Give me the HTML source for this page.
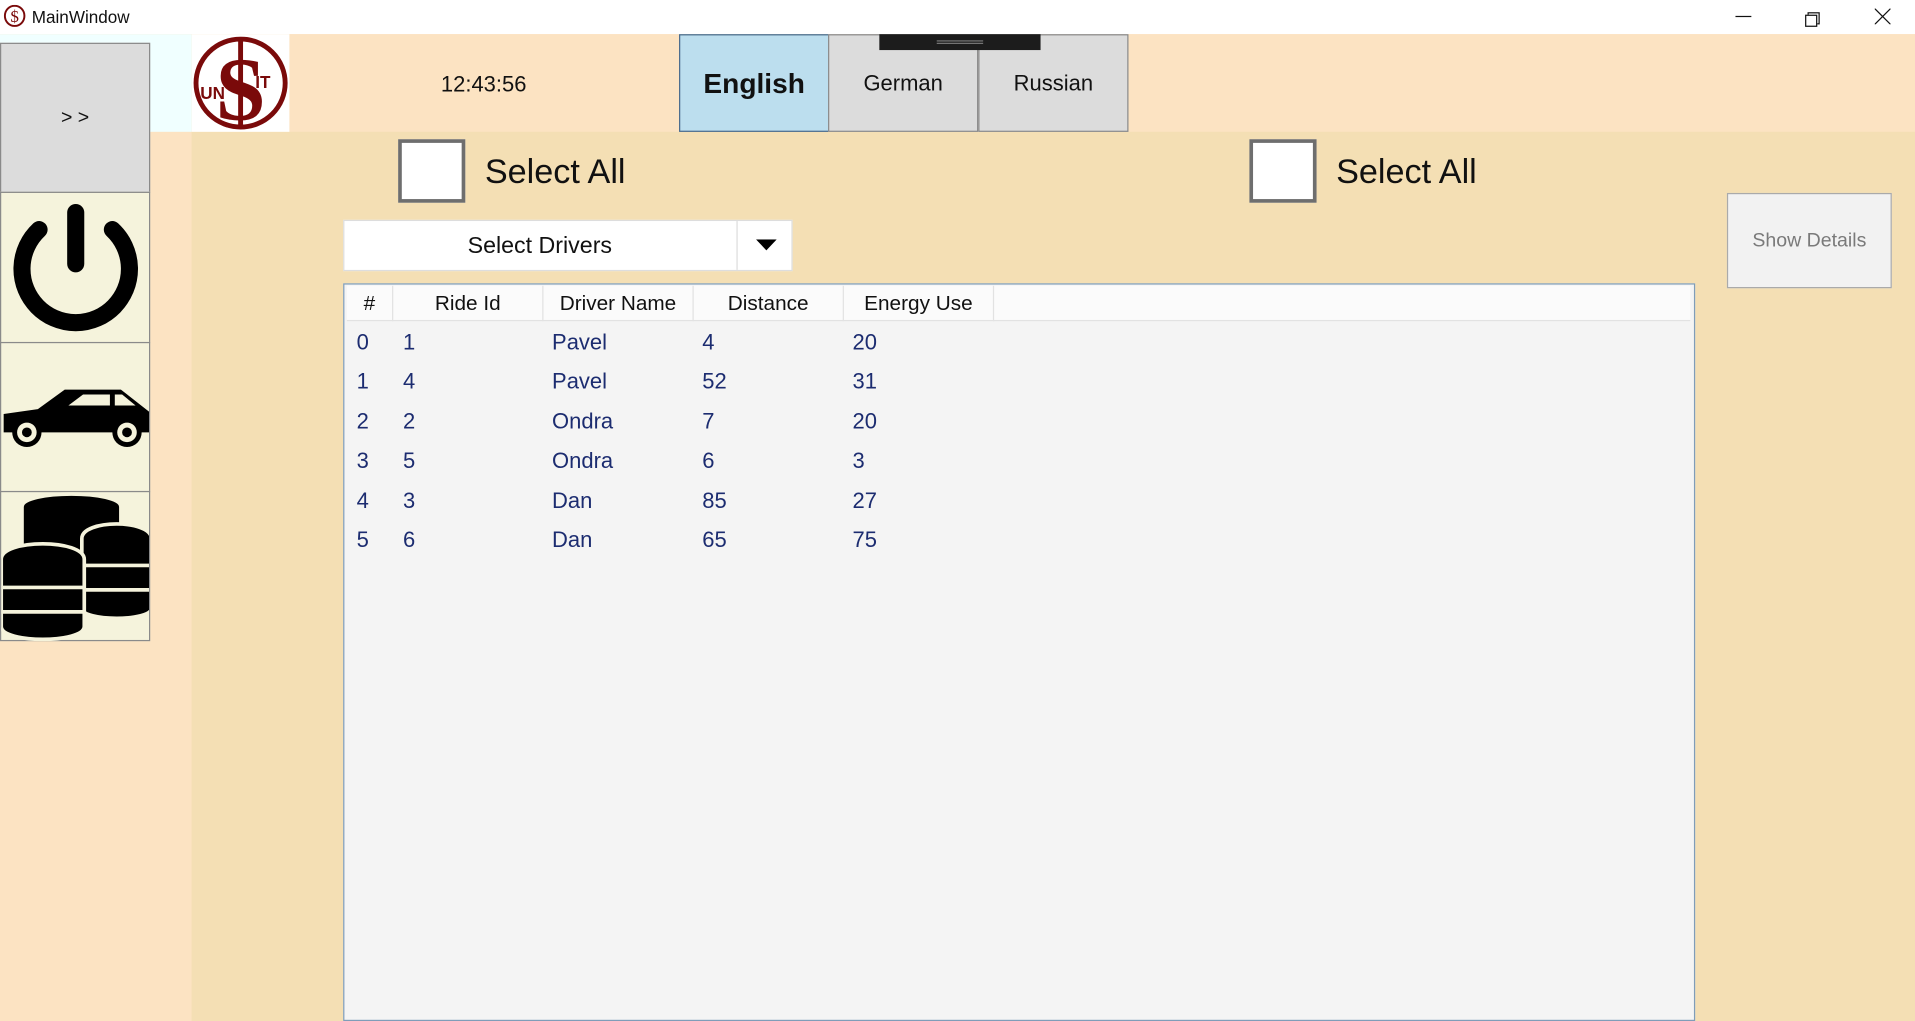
<!DOCTYPE html>
<html><head><meta charset="utf-8"><style>
html,body{margin:0;padding:0;width:1915px;height:1020px;overflow:hidden;background:#f5deb3}
#w{position:absolute;left:0;top:0;width:1568px;height:835.2px;transform:scale(1.2213);transform-origin:0 0;font-family:"Liberation Sans",sans-serif}
.a{position:absolute;box-sizing:border-box}
.t{position:absolute;white-space:nowrap}
.sb{left:0;width:123px;border:1px solid #8a8a8a;background:#f5f3dc}
.lang{top:28px;height:80px;width:123px;border:1px solid #8a8a8a;background:#dcdcdc;display:flex;align-items:center;justify-content:center;font-size:18px;color:#111}
.cb{width:55px;height:52px;border:3px solid #6e6e6e;background:#fff}
.h{top:234px;height:29px;border-right:1px solid #e2e2e2;font-size:17px;text-align:center;line-height:29px;color:#111}
.r{font-size:18px;color:#1c2c70}
</style></head><body><div id="w">
<div class="a" style="left:0;top:0;width:1568px;height:28px;background:#fff"></div>
<svg class="a" style="left:3px;top:4px" width="18" height="18" viewBox="0 0 18 18"><ellipse cx="9" cy="9" rx="8" ry="8.3" fill="none" stroke="#7a0a0a" stroke-width="1.6"/><text x="9" y="14" font-size="14" text-anchor="middle" fill="#7a0a0a" font-family="Liberation Serif">$</text></svg>
<div class="t" style="left:26px;top:6px;font-size:14px;color:#111">MainWindow</div>
<div class="a" style="left:1421px;top:13px;width:13px;height:1px;background:#111"></div>
<div class="a" style="left:1480px;top:10px;width:10px;height:10px;border:1px solid #111;background:#fff"></div>
<div class="a" style="left:1478px;top:12px;width:10px;height:10px;border:1px solid #111;background:#fff"></div>
<svg class="a" style="left:1535px;top:7px" width="13" height="13"><path d="M0 0L13 13M13 0L0 13" stroke="#111" stroke-width="1"/></svg>
<div class="a" style="left:0;top:28px;width:157px;height:80px;background:#f0ffff"></div>
<div class="a" style="left:157px;top:28px;width:80px;height:80px;background:#fff"></div>
<div class="a" style="left:237px;top:28px;width:1331px;height:80px;background:#fce3c2"></div>
<div class="a" style="left:0;top:108px;width:157px;height:728px;background:#fce3c2"></div>
<div class="a" style="left:157px;top:108px;width:1411px;height:728px;background:#f4dfb4"></div>
<svg class="a" style="left:158px;top:30px" width="78" height="76" viewBox="0 0 78 76"><ellipse cx="39" cy="38" rx="36.5" ry="36" fill="none" stroke="#7a0a0a" stroke-width="4"/><text x="39" y="68" font-size="74" text-anchor="middle" fill="#7a0a0a" font-family="Liberation Serif" font-weight="bold">S</text><rect x="37" y="2" width="4" height="72" fill="#7a0a0a"/><text x="6" y="51" font-size="14" font-weight="bold" fill="#7a0a0a" font-family="Liberation Sans">UN</text><text x="51" y="42" font-size="14" font-weight="bold" fill="#7a0a0a" font-family="Liberation Sans">IT</text></svg>
<div class="t" style="left:361px;top:59px;font-size:18px;color:#111">12:43:56</div>
<div class="a sb" style="top:35px;height:123px;background:#dcdcdc;font-size:16px;text-align:center;line-height:122px;color:#111">&gt; &gt;</div>
<div class="a sb" style="top:157px;height:124px"><svg width="121" height="122" viewBox="0 0 121 122"><path d="M31 30A44 44 0 1 0 91 30" fill="none" stroke="#000" stroke-width="14" stroke-linecap="round"/><line x1="61" y1="16" x2="61" y2="58" stroke="#000" stroke-width="14" stroke-linecap="round"/></svg></div>
<div class="a sb" style="top:280px;height:123px"><svg width="121" height="122" viewBox="0 0 121 122"><path d="M2 58L30 54L52 38H98L121 56V73H2Z" fill="#000"/><path d="M55 51L67 42H89V51ZM93 42H99L110 51H93Z" fill="#f5f3dc"/><circle cx="21" cy="73" r="12" fill="#000"/><circle cx="21" cy="73" r="8" fill="#f5f3dc"/><circle cx="21" cy="73" r="4" fill="#000"/><circle cx="103" cy="73" r="12" fill="#000"/><circle cx="103" cy="73" r="8" fill="#f5f3dc"/><circle cx="103" cy="73" r="4" fill="#000"/></svg></div>
<div class="a sb" style="top:402px;height:123px"><svg width="121" height="122" viewBox="0 0 121 122"><g fill="#000" stroke="#f5f3dc" stroke-width="3"><path d="M17 12C17 -2 98 -2 98 12V55H17Z"/><path d="M66 38C66 22 123 22 123 38V95C123 106 66 106 66 95Z"/><path d="M66 60H123M66 80H123"/><path d="M0 55C0 38 68 38 68 55V110C68 124 0 124 0 110Z"/><path d="M0 78H68M0 98H68"/></g></svg></div>
<div class="a lang" style="left:556px;background:#bcdeee;border-color:#4a6a8a;font-size:23px;font-weight:bold">English</div>
<div class="a lang" style="left:678px">German</div>
<div class="a lang" style="left:801px">Russian</div>
<div class="a" style="left:720px;top:28px;width:132px;height:13px;background:#1c1c1c"></div>
<div class="a" style="left:767px;top:33px;width:38px;height:1px;background:#777"></div>
<div class="a" style="left:767px;top:35px;width:38px;height:1px;background:#777"></div>
<div class="a cb" style="left:326px;top:114px"></div>
<div class="t" style="left:397px;top:125px;font-size:28px;color:#111">Select All</div>
<div class="a cb" style="left:1023px;top:114px"></div>
<div class="t" style="left:1094px;top:125px;font-size:28px;color:#111">Select All</div>
<div class="a" style="left:1414px;top:158px;width:135px;height:78px;background:#f2f2f2;border:1px solid #aaa;font-size:16px;color:#7a7a7a;text-align:center;line-height:78px">Show Details</div>
<div class="a" style="left:281px;top:180px;width:368px;height:42px;background:#fff;border:1px solid #ddd"></div>
<div class="a" style="left:603px;top:181px;width:1px;height:40px;background:#ddd"></div>
<div class="t" style="left:281px;top:191px;width:322px;text-align:center;font-size:19px;color:#111">Select Drivers</div>
<svg class="a" style="left:619px;top:196px" width="17" height="10"><path d="M0 0H17L8.5 9Z" fill="#000"/></svg>
<div class="a" style="left:281px;top:232px;width:1107px;height:604px;background:#f4f4f4;border:1px solid #7f9db9"></div>
<div class="a" style="left:284px;top:234px;width:1100px;height:29px;background:#fbfbfb;border-bottom:1px solid #e2e2e2"></div>
<div class="a h" style="left:284px;width:38px">#</div>
<div class="a h" style="left:322px;width:123px">Ride Id</div>
<div class="a h" style="left:445px;width:123px">Driver Name</div>
<div class="a h" style="left:568px;width:123px">Distance</div>
<div class="a h" style="left:691px;width:123px">Energy Use</div>
<div class="a" style="left:292px;top:264px;line-height:32.4px"><div class="r">0<br>1<br>2<br>3<br>4<br>5</div></div>
<div class="a" style="left:330px;top:264px;line-height:32.4px"><div class="r">1<br>4<br>2<br>5<br>3<br>6</div></div>
<div class="a" style="left:452px;top:264px;line-height:32.4px"><div class="r">Pavel<br>Pavel<br>Ondra<br>Ondra<br>Dan<br>Dan</div></div>
<div class="a" style="left:575px;top:264px;line-height:32.4px"><div class="r">4<br>52<br>7<br>6<br>85<br>65</div></div>
<div class="a" style="left:698px;top:264px;line-height:32.4px"><div class="r">20<br>31<br>20<br>3<br>27<br>75</div></div>
</div></body></html>
